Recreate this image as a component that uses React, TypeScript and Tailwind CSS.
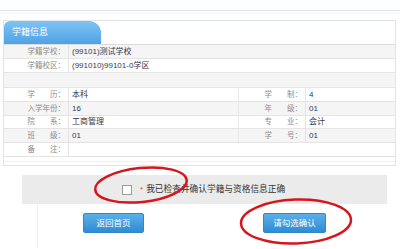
import React from "react";

const FONT = { fontFamily: '"Liberation Sans", "Noto Sans CJK SC", sans-serif' };

function Label({ text }: { text: string }) {
  if (text.length === 2) {
    return (
      <span className="inline-flex items-center">
        <span className="inline-flex w-[30px] justify-between">
          <span>{text[0]}</span>
          <span>{text[1]}</span>
        </span>
        <span>：</span>
      </span>
    );
  }
  return <span>{text}：</span>;
}

function FourRow({
  l1,
  v1,
  l2,
  v2,
  gray,
  h,
}: {
  l1: string;
  v1: string;
  l2?: string;
  v2?: string;
  gray?: boolean;
  h: string;
}) {
  return (
    <div
      className={`grid grid-cols-[65px_170px_67px_1fr] border-b border-[#e4e4e4] ${h} ${
        gray ? "bg-[#f5f5f5]" : "bg-white"
      }`}
    >
      <div className="flex items-center justify-end pr-[3px] border-r border-[#e4e4e4] text-[7.5px] text-[#8c8c8c]">
        <Label text={l1} />
      </div>
      <div className={`flex items-center pl-[3px] text-[8px] text-[#333a52] ${l2 ? "border-r border-[#e8e8e8]" : ""}`}>
        {v1}
      </div>
      <div className={`flex items-center justify-end pr-[3px] text-[7.5px] text-[#8c8c8c] ${l2 ? "border-r border-[#e4e4e4]" : ""}`}>
        {l2 ? <Label text={l2} /> : null}
      </div>
      <div className="flex items-center pl-[3px] text-[8px] text-[#333a52]">{v2}</div>
    </div>
  );
}

function TwoRow({ l, v, gray, h }: { l: string; v: string; gray?: boolean; h: string }) {
  return (
    <div className={`flex border-b border-[#e4e4e4] ${h} ${gray ? "bg-[#f5f5f5]" : "bg-white"}`}>
      <div className="w-[65px] flex items-center justify-end pr-[3px] border-r border-[#e4e4e4] text-[7.5px] text-[#8c8c8c]">
        <Label text={l} />
      </div>
      <div className="flex items-center pl-[3px] text-[8px] text-[#333a52]">{v}</div>
    </div>
  );
}

export default function App() {
  return (
    <div className="relative w-[400px] h-[249px] bg-white overflow-hidden" style={FONT}>
      <div className="h-[10px] bg-white" />
      <div className="h-px bg-[#dde8ef]" />
      <div className="h-[2px] bg-white" />
      <div className="h-px bg-[#fbf8ea]" />
      <div className="h-[6px] bg-white" />

      <div className="ml-[3px] mr-[4px] border border-[#e0e5ea] bg-white">
        <div className="h-[24px] border-b border-[#dcdcdc] flex">
          <div className="w-[97px] h-full rounded-tl-[6px] rounded-tr-[12px] bg-gradient-to-b from-[#7fc3f3] to-[#4da3e6] flex items-center pl-[8px] text-[9px] text-white">
            学籍信息
          </div>
        </div>
        <TwoRow l="学籍学校" v="(99101)测试学校" gray h="h-[14px]" />
        <TwoRow l="学籍校区" v="(991010)99101-0学区" h="h-[14px]" />
        <div className="h-[15px] bg-[#f5f5f5] border-b border-[#e4e4e4]" />
        <FourRow l1="学历" v1="本科" l2="学制" v2="4" h="h-[14px]" />
        <FourRow l1="入学年份" v1="16" l2="年级" v2="01" gray h="h-[14px]" />
        <FourRow l1="院系" v1="工商管理" l2="专业" v2="会计" h="h-[13px]" />
        <FourRow l1="班级" v1="01" l2="学号" v2="01" gray h="h-[14px]" />
        <TwoRow l="备注" v="" h="h-[14px]" />
        <div className="h-[5px] border-b border-[#eef0f2]" />
        <div className="h-[3px]" />
      </div>

      <div className="h-[9px]" />
      <div className="ml-[22px] w-[365px] h-[29px] bg-[#ebebeb] flex items-center">
        <div className="ml-[100px] w-[10px] h-[10px] border border-[#9a9a9a] bg-white" />
        <span className="ml-[8px] text-[8px] text-[#e0463c]">*</span>
        <span className="ml-[3px] text-[8.7px] text-[#333333]">我已检查并确认学籍与资格信息正确</span>
      </div>

      <div className="ml-[37px] border-l border-[#eef0f2] h-[44px] pt-[9px] flex">
        <button className="ml-[45px] w-[61px] h-[20px] rounded-[2px] border border-[#2f86c8] bg-gradient-to-b from-[#5bb0ea] to-[#2f8bd3] text-white text-[8.5px] flex items-center justify-center">
          返回首页
        </button>
        <button className="ml-[119px] w-[63px] h-[20px] rounded-[2px] border border-[#2f86c8] bg-gradient-to-b from-[#5bb0ea] to-[#2f8bd3] text-white text-[8.5px] flex items-center justify-center">
          请勾选确认
        </button>
      </div>

      <svg className="absolute inset-0 pointer-events-none" width="400" height="249">
        <ellipse cx="141" cy="185" rx="46" ry="17" fill="none" stroke="#d6161d" strokeWidth="2.5" transform="rotate(-6 141 185)" />
        <ellipse cx="296" cy="221.5" rx="55" ry="22" fill="none" stroke="#d6161d" strokeWidth="2.5" transform="rotate(-2 296 221.5)" />
      </svg>
    </div>
  );
}
